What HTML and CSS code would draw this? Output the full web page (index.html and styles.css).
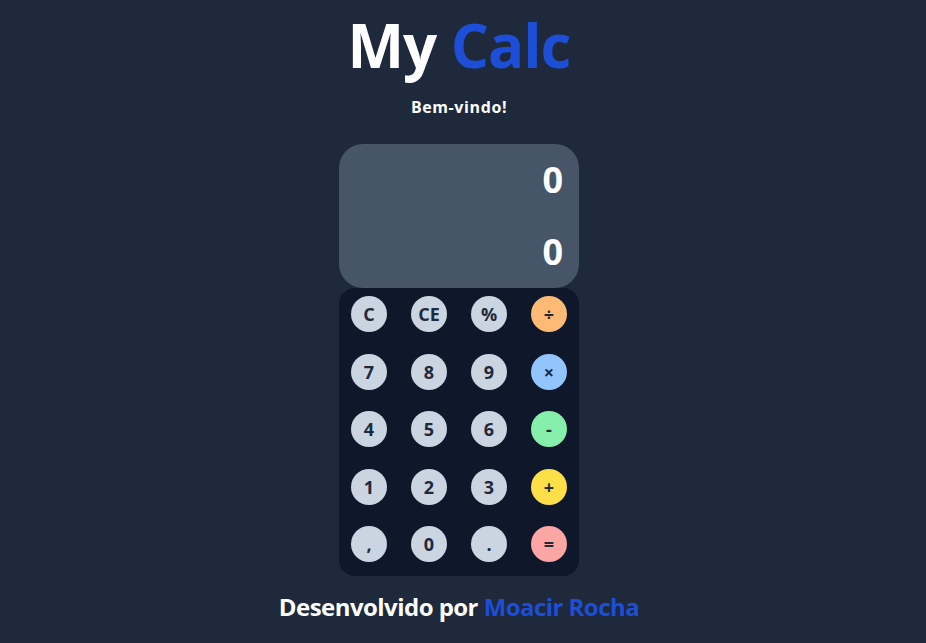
FILE: index.html
```html
<!DOCTYPE html>
<html lang="pt-BR">
<head>
<meta charset="utf-8">
<title>My Calc</title>
<link rel="stylesheet" href="styles.css">
</head>
<body>
<main class="page">
  <h1 class="title">My <span class="accent">Calc</span></h1>
  <p class="welcome">Bem-vindo!</p>
  <section class="calc">
    <div class="display">
      <div class="display-line">0</div>
      <div class="display-line">0</div>
    </div>
    <div class="keypad">
      <button class="key">C</button>
      <button class="key">CE</button>
      <button class="key">%</button>
      <button class="key op-div">÷</button>
      <button class="key">7</button>
      <button class="key">8</button>
      <button class="key">9</button>
      <button class="key op-mul">×</button>
      <button class="key">4</button>
      <button class="key">5</button>
      <button class="key">6</button>
      <button class="key op-sub">-</button>
      <button class="key">1</button>
      <button class="key">2</button>
      <button class="key">3</button>
      <button class="key op-add">+</button>
      <button class="key">,</button>
      <button class="key">0</button>
      <button class="key">.</button>
      <button class="key op-eq">=</button>
    </div>
  </section>
  <footer class="footer">Desenvolvido por <span class="accent">Moacir Rocha</span></footer>
</main>
</body>
</html>
```
FILE: styles.css
```css
* { box-sizing: border-box; }
html, body { margin: 0; padding: 0; }
body {
  background: #1e293b;
  color: #ffffff;
  font-family: "Open Sans", "Noto Sans", sans-serif;
  font-weight: 700;
  height: 643px;
  overflow: hidden;
}
.page {
  display: flex;
  flex-direction: column;
  align-items: center;
  padding-right: 8px;
}
.title {
  margin: 15px 0 0;
  font-size: 60px;
  line-height: 60px;
  font-weight: 700;
  letter-spacing: -1px;
}
.accent { color: #1d4ed8; }
.welcome {
  margin: 20px 0 0;
  font-size: 16px;
  line-height: 24px;
  letter-spacing: 0.6px;
}
.calc {
  margin-top: 25px;
  width: 240px;
  display: flex;
  flex-direction: column;
}
.display {
  height: 144px;
  background: #475569;
  border-radius: 24px;
  padding: 14px 16px 14px;
  display: flex;
  flex-direction: column;
  justify-content: space-between;
  align-items: flex-end;
}
.display-line {
  font-size: 36px;
  line-height: 44px;
}
.keypad {
  background: #0f172a;
  border-radius: 16px;
  padding: 8px 0 14px;
  display: grid;
  grid-template-columns: repeat(4, 60px);
  row-gap: 21.5px;
  justify-items: center;
}
.key {
  width: 36px;
  height: 36px;
  border-radius: 50%;
  border: none;
  padding: 0;
  background: #cbd5e1;
  color: #1e293b;
  font-family: inherit;
  font-size: 18px;
  font-weight: 700;
  display: flex;
  align-items: center;
  justify-content: center;
}
.op-div { background: #fdba74; }
.op-mul { background: #93c5fd; }
.op-sub { background: #86efac; }
.op-add { background: #fde047; }
.op-eq { background: #fca5a5; }
.footer {
  margin-top: 15px;
  font-size: 24px;
  line-height: 32px;
  letter-spacing: -0.55px;
}
```
